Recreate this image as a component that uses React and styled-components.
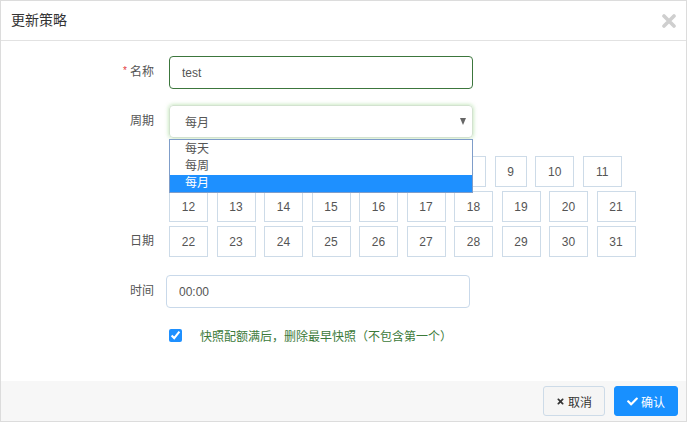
import React from "react";
import styled, { createGlobalStyle } from "styled-components";
import { FaTimes, FaCheck } from "react-icons/fa";

const GlobalStyle = createGlobalStyle`
  html, body {
    margin: 0;
    padding: 0;
    background: #ffffff;
  }
  body {
    font-family: "Liberation Sans", "Noto Sans CJK SC", sans-serif;
    font-size: 12px;
    color: #555;
  }
`;

const Dialog = styled.div`
  width: 687px;
  height: 422px;
  box-sizing: border-box;
  border: 1px solid #dcdcdc;
  display: flex;
  flex-direction: column;
  background: #fff;
`;

const Header = styled.div`
  height: 39px;
  border-bottom: 1px solid #e2e2e2;
  display: flex;
  align-items: center;
  justify-content: space-between;
  padding: 0 9px 0 10px;
`;

const Title = styled.h4`
  margin: 0;
  font-size: 14px;
  font-weight: normal;
  color: #333;
  padding-bottom: 4px;
`;

const CloseButton = styled.button`
  border: none;
  background: none;
  padding: 0;
  width: 16px;
  height: 16px;
  display: flex;
  align-items: center;
  justify-content: center;
  cursor: pointer;
`;

const Body = styled.div`
  flex: 1;
  padding-top: 15px;
`;

const Row = styled.div`
  display: flex;
  align-items: ${(p) => (p.$bottom ? "flex-end" : "center")};
  margin-bottom: ${(p) => p.$gap || 0}px;
`;

const Label = styled.label`
  width: 153px;
  text-align: right;
  color: #555;
  font-size: 12px;
  line-height: ${(p) => p.$lh || 33}px;
  flex-shrink: 0;
`;

const Required = styled.span`
  color: #e4393c;
  font-size: 10px;
  margin-right: 3px;
  position: relative;
  top: -2px;
`;

const Control = styled.div`
  margin-left: ${(p) => p.$offset || 15}px;
  position: relative;
`;

const TextInput = styled.input`
  width: 304px;
  height: 33px;
  box-sizing: border-box;
  border: 1px solid ${(p) => p.$border || "#c9d9ea"};
  border-radius: 4px;
  padding: 0 12px;
  font-family: "Liberation Sans", "Noto Sans CJK SC", sans-serif;
  font-size: 12px;
  color: #555;
  outline: none;
`;

const SelectBox = styled.div`
  width: 304px;
  height: 33px;
  box-sizing: border-box;
  border: 1px solid #d3e2d0;
  border-radius: 4px;
  box-shadow: 0 0 4px rgba(120, 200, 100, 0.55);
  padding: 0 15px;
  display: flex;
  align-items: center;
  justify-content: space-between;
  color: #555;
`;

const Arrow = styled.span`
  width: 0;
  height: 0;
  border-left: 3.5px solid transparent;
  border-right: 3.5px solid transparent;
  border-top: 7px solid #666;
  margin-right: -9px;
  margin-top: -1px;
`;

const Options = styled.ul`
  position: absolute;
  left: 0;
  top: 34px;
  width: 304px;
  box-sizing: border-box;
  margin: 0;
  padding: 1px 0 0;
  list-style: none;
  border: 1px solid #7f9dc9;
  background: #fff;
  z-index: 2;
`;

const Option = styled.li`
  height: 17px;
  line-height: 17px;
  padding-left: 15px;
  font-size: 12px;
  color: ${(p) => (p.$active ? "#fff" : "#555")};
  background: ${(p) => (p.$active ? "#1e90ff" : "transparent")};
`;

const DayGrid = styled.div`
  width: 470px;
  display: flex;
  flex-wrap: wrap;
  column-gap: 8.5px;
  row-gap: 4px;
`;

const Day = styled.span`
  width: ${(p) => (p.$wide ? 39 : 32.2)}px;
  height: 31px;
  box-sizing: border-box;
  border: 1px solid #cddbe8;
  display: flex;
  align-items: center;
  justify-content: center;
  font-size: 12px;
  color: #555;
`;

const CheckRow = styled.label`
  display: flex;
  align-items: center;
  margin-left: 168px;
  color: #3c7a3a;
  font-size: 12px;
`;

const Check = styled.input`
  width: 13px;
  height: 13px;
  margin: 0 18px 0 0;
  accent-color: #1e90ff;
`;

const Footer = styled.div`
  height: 40px;
  background: #f7f7f7;
  display: flex;
  align-items: center;
  justify-content: flex-end;
  gap: 9px;
  padding: 0 8px 0 0;
`;

const Button = styled.button`
  height: 30px;
  box-sizing: border-box;
  padding: 0 ${(p) => (p.$primary ? 12 : 12)}px;
  border-radius: 3px;
  border: 1px solid ${(p) => (p.$primary ? "#1890ff" : "#cddbe8")};
  background: ${(p) => (p.$primary ? "#1890ff" : "#f5f5f5")};
  color: ${(p) => (p.$primary ? "#fff" : "#333")};
  font-family: "Liberation Sans", "Noto Sans CJK SC", sans-serif;
  font-size: 12px;
  display: flex;
  align-items: center;
  gap: 3px;
  cursor: pointer;
  svg {
    font-size: ${(p) => (p.$primary ? 11 : 9)}px;
  }
`;

const cycles = ["每天", "每周", "每月"];
const days = Array.from({ length: 31 }, (_, i) => i + 1);

export default function App() {
  return (
    <>
      <GlobalStyle />
      <Dialog>
        <Header>
          <Title>更新策略</Title>
          <CloseButton aria-label="close">
            <svg width="14" height="14" viewBox="0 0 14 14">
              <path
                d="M2 2 L12 12 M12 2 L2 12"
                stroke="#cfcfcf"
                strokeWidth="3.6"
                strokeLinecap="round"
              />
            </svg>
          </CloseButton>
        </Header>
        <Body>
          <Row $gap={16}>
            <Label>
              <Required>*</Required>名称
            </Label>
            <Control>
              <TextInput $border="#3c763d" defaultValue="test" />
            </Control>
          </Row>
          <Row $gap={18}>
            <Label>周期</Label>
            <Control>
              <SelectBox>
                每月
                <Arrow />
              </SelectBox>
              <Options>
                {cycles.map((c) => (
                  <Option key={c} $active={c === "每月"}>
                    {c}
                  </Option>
                ))}
              </Options>
            </Control>
          </Row>
          <Row $bottom $gap={18}>
            <Label $lh={31}>日期</Label>
            <Control>
              <DayGrid>
                {days.map((d) => (
                  <Day key={d} $wide={d > 9}>
                    {d}
                  </Day>
                ))}
              </DayGrid>
            </Control>
          </Row>
          <Row $gap={19}>
            <Label>时间</Label>
            <Control $offset={12}>
              <TextInput defaultValue="00:00" />
            </Control>
          </Row>
          <CheckRow>
            <Check type="checkbox" defaultChecked />
            快照配额满后，删除最早快照（不包含第一个）
          </CheckRow>
        </Body>
        <Footer>
          <Button>
            <FaTimes />
            取消
          </Button>
          <Button $primary>
            <FaCheck />
            确认
          </Button>
        </Footer>
      </Dialog>
    </>
  );
}
